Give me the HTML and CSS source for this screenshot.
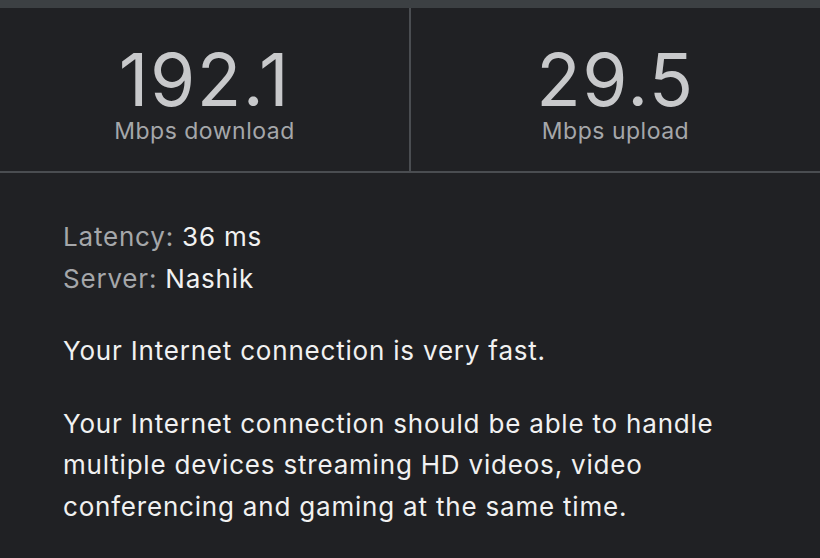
FILE: index.html
```html
<!DOCTYPE html>
<html lang="en">
<head>
<meta charset="utf-8">
<title>Speed test result</title>
<link rel="stylesheet" href="styles.css">
</head>
<body>
<div class="topbar"></div>
<section class="stats">
  <div class="stat">
    <div class="stat-value">192.1</div>
    <div class="stat-label">Mbps download</div>
  </div>
  <div class="stat">
    <div class="stat-value">29.5</div>
    <div class="stat-label">Mbps upload</div>
  </div>
</section>
<section class="details">
  <div class="meta">
    <div class="meta-row"><span class="meta-key">Latency:</span> <span class="meta-val">36 ms</span></div>
    <div class="meta-row"><span class="meta-key">Server:</span> <span class="meta-val">Nashik</span></div>
  </div>
  <p class="para">Your Internet connection is very fast.</p>
  <p class="para para-long">Your Internet connection should be able to handle multiple devices streaming HD videos, video conferencing and gaming at the same time.</p>
</section>
</body>
</html>
```
FILE: styles.css
```css
html, body {
  margin: 0;
  padding: 0;
  background: #202124;
  font-family: Inter, "Liberation Sans", Arial, sans-serif;
  color: #e8eaed;
}
.topbar {
  height: 8px;
  background: #3c4043;
}
.stats {
  display: grid;
  grid-template-columns: 409px 1fr;
  height: 163px;
  border-bottom: 2px solid #4a4d51;
}
.stat {
  display: flex;
  flex-direction: column;
  align-items: center;
  padding-top: 36px;
}
.stat + .stat {
  border-left: 2px solid #4a4d51;
}
.stat-value {
  font-size: 73px;
  line-height: 72px;
  color: #c8c9cb;
  font-weight: 400;
  letter-spacing: 1.5px;
}
.stat-label {
  font-size: 23px;
  line-height: 26px;
  margin-top: 2px;
  color: #a5a7aa;
  letter-spacing: 0.5px;
}
.details {
  padding: 43px 60px 0 63px;
  font-size: 26px;
  line-height: 42px;
  letter-spacing: 0.8px;
}
.meta-key {
  color: #a5a7aa;
}
.meta-val {
  color: #f1f1f1;
}
.para {
  margin: 30px 0 0;
  line-height: 41.5px;
  color: #f1f1f1;
}
.para-long {
  margin-top: 31px;
}
```
